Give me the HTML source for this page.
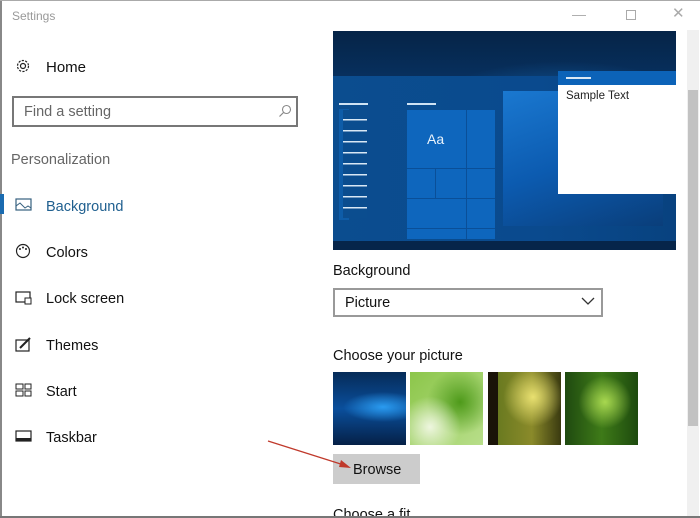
<!DOCTYPE html>
<html><head><style>
*{margin:0;padding:0;box-sizing:border-box}
body{width:700px;height:518px;overflow:hidden;background:#fff;font-family:"Liberation Sans",sans-serif;position:relative;color:#000}
.a{position:absolute}
.nav{font-size:14.5px;color:#111}
</style></head><body>
<div class="a" style="left:0;top:0;width:2px;height:518px;background:#888"></div>
<div class="a" style="left:0;top:0;width:700px;height:1px;background:#aaa"></div>
<div class="a" style="left:0;top:516px;width:700px;height:2px;background:#777"></div>
<div class="a" style="left:12px;top:9px;font-size:12px;color:#999">Settings</div>
<div class="a" style="left:572px;top:6px;font-size:14px;color:#aaa">—</div>
<div class="a" style="left:626px;top:10px;width:10px;height:10px;border:1px solid #aaa"></div>
<div class="a" style="left:672px;top:4px;font-size:15px;color:#aaa">✕</div>

<svg class="a" style="left:15px;top:58px" width="16" height="16" viewBox="0 0 16 16"><circle cx="8" cy="8" r="2.5" fill="none" stroke="#222" stroke-width="1.2"/><circle cx="8" cy="8" r="5.5" fill="none" stroke="#222" stroke-width="1.2" stroke-dasharray="2.2 1.3"/></svg>
<div class="a nav" style="left:46px;top:59px;font-size:15px">Home</div>
<div class="a" style="left:12px;top:96px;width:286px;height:31px;border:2px solid #777"></div>
<div class="a" style="left:24px;top:104px;font-size:14.5px;color:#666">Find a setting</div>
<svg class="a" style="left:278px;top:104px" width="14" height="14"><circle cx="8.5" cy="5.5" r="4" fill="none" stroke="#888" stroke-width="1.1"/><path d="M5.5 8.5L1.5 12.5" stroke="#888" stroke-width="1.2"/></svg>
<div class="a" style="left:11px;top:152px;font-size:14.5px;color:#666">Personalization</div>
<div class="a" style="left:0;top:194px;width:4px;height:20px;background:#1a6bb0"></div>
<svg class="a" style="left:15px;top:198px" width="18" height="14"><rect x="1" y="1" width="15" height="11" fill="none" stroke="#36607f" stroke-width="1.2"/><path d="M1 8l4-3 5 5 3-2 3 2" fill="none" stroke="#36607f"/></svg>
<div class="a nav" style="left:46px;top:199px;color:#1f5f8f">Background</div>
<svg class="a" style="left:15px;top:243px" width="17" height="16"><circle cx="8" cy="8" r="6.5" fill="none" stroke="#222" stroke-width="1.2"/><circle cx="5" cy="6" r="1" fill="#222"/><circle cx="8" cy="4.5" r="1" fill="#222"/><circle cx="11" cy="6" r="1" fill="#222"/></svg>
<div class="a nav" style="left:46px;top:245px">Colors</div>
<svg class="a" style="left:15px;top:291px" width="18" height="14"><rect x="1" y="1" width="14" height="10" fill="none" stroke="#222" stroke-width="1.2"/><rect x="10" y="7" width="6" height="6" fill="#fff" stroke="#222"/></svg>
<div class="a nav" style="left:46px;top:291px">Lock screen</div>
<svg class="a" style="left:15px;top:337px" width="18" height="16"><rect x="1" y="3" width="13" height="11" fill="none" stroke="#222" stroke-width="1.2"/><path d="M5 11L15 1" stroke="#222" stroke-width="2"/></svg>
<div class="a nav" style="left:46px;top:338px">Themes</div>
<svg class="a" style="left:15px;top:383px" width="18" height="14"><rect x="1" y="1" width="7" height="5" fill="none" stroke="#222"/><rect x="10" y="1" width="6" height="5" fill="none" stroke="#222"/><rect x="1" y="8" width="7" height="5" fill="none" stroke="#222"/><rect x="10" y="8" width="6" height="5" fill="none" stroke="#222"/></svg>
<div class="a nav" style="left:46px;top:384px">Start</div>
<svg class="a" style="left:15px;top:430px" width="18" height="12"><rect x="1" y="1" width="15" height="10" fill="none" stroke="#222" stroke-width="1.2"/><rect x="1" y="8" width="15" height="3" fill="#222"/></svg>
<div class="a nav" style="left:46px;top:430px">Taskbar</div>

<div class="a" style="left:333px;top:31px;width:343px;height:219px;background:radial-gradient(ellipse 180px 90px at 230px 120px,#1d7fd6,transparent),linear-gradient(#052447 0%,#0a3a72 40%,#0b4a90 60%,#062a55 100%);overflow:hidden">
 <div class="a" style="left:0;top:45px;width:343px;height:180px;background:linear-gradient(90deg,#0b4d8f,#0a4a8e 60%,#08427f)"></div>
 <div class="a" style="left:170px;top:60px;width:160px;height:135px;background:linear-gradient(160deg,#1a78d0,#0c5bb0 50%,#0a3e7a)"></div>
 <div class="a" style="left:0;top:210px;width:343px;height:9px;background:#06254a"></div>
 <div class="a" style="left:6px;top:72px;width:29px;height:2px;background:#cfe3f4"></div>
 <div class="a" style="left:6px;top:78px;width:10px;height:111px;background:#0e5ca8"></div>
 <div class="a" style="left:10px;top:79px;width:24px;height:108px;background:repeating-linear-gradient(#0b4d8f 0 9px,#d9e8f5 9px 10.6px,#0b4d8f 10.6px 11px)"></div>
 <div class="a" style="left:74px;top:72px;width:29px;height:2px;background:#cfe3f4"></div>
 <div class="a" style="left:74px;top:79px;width:88px;height:129px;background:#0e66bd"></div>
 <div class="a" style="left:74px;top:137px;width:88px;height:1px;background:#0a4f98"></div>
 <div class="a" style="left:74px;top:167px;width:88px;height:1px;background:#0a4f98"></div>
 <div class="a" style="left:74px;top:197px;width:88px;height:1px;background:#0a4f98"></div>
 <div class="a" style="left:133px;top:79px;width:1px;height:129px;background:#0a4f98"></div>
 <div class="a" style="left:102px;top:137px;width:1px;height:30px;background:#0a4f98"></div>
 <div class="a" style="left:94px;top:100px;font-size:14px;color:#e8f2fb">Aa</div>
 <div class="a" style="left:225px;top:40px;width:118px;height:14px;background:#0c63b8"></div>
 <div class="a" style="left:233px;top:46px;width:25px;height:2px;background:#d9e8f5"></div>
 <div class="a" style="left:225px;top:54px;width:118px;height:109px;background:#fff"></div>
 <div class="a" style="left:233px;top:59px;font-size:11.5px;color:#222">Sample Text</div>
</div>

<div class="a" style="left:333px;top:263px;font-size:14.5px;color:#111">Background</div>
<div class="a" style="left:333px;top:288px;width:270px;height:29px;border:2px solid #999"></div>
<div class="a" style="left:345px;top:295px;font-size:14.5px;color:#111">Picture</div>
<svg class="a" style="left:581px;top:297px" width="14" height="9"><path d="M1 1l6 6 6-6" fill="none" stroke="#333" stroke-width="1.3"/></svg>
<div class="a" style="left:333px;top:348px;font-size:14.5px;color:#111">Choose your picture</div>
<div class="a" style="left:333px;top:372px;width:73px;height:73px;background:radial-gradient(ellipse 40px 15px at 50px 35px,#2a9bf0,transparent),linear-gradient(#062b58,#0a4f9c 50%,#052046)"></div>
<div class="a" style="left:410px;top:372px;width:73px;height:73px;background:radial-gradient(circle at 20px 55px,#eef6df,transparent 40%),radial-gradient(circle at 50px 30px,#4e9a1a,transparent 50%),linear-gradient(135deg,#8cc64a,#b8de8a)"></div>
<div class="a" style="left:488px;top:372px;width:73px;height:73px;background:radial-gradient(circle at 45px 25px,#e8e070,transparent 45%),linear-gradient(90deg,#1a1408 0 10px,#6a7a20 10px,#8a8a2a 60%,#3a3a10);"></div>
<div class="a" style="left:565px;top:372px;width:73px;height:73px;background:radial-gradient(circle at 40px 30px,#a8d850,transparent 45%),linear-gradient(90deg,#1f4a10,#3e7a18,#1d4a0e)"></div>
<div class="a" style="left:333px;top:454px;width:87px;height:30px;background:#cccccc"></div>
<div class="a" style="left:353px;top:462px;font-size:14.5px;color:#111">Browse</div>
<svg class="a" style="left:265px;top:438px" width="90" height="35"><path d="M3 3L82 28" stroke="#c0392b" stroke-width="1.3"/><path d="M86 30L76 22L74 29Z" fill="#c0392b"/></svg>
<div class="a" style="left:333px;top:508px;width:80px;height:8px;overflow:hidden"><div style="font-size:14.5px;color:#111;margin-top:-1px">Choose a fit</div></div>

<div class="a" style="left:687px;top:30px;width:12px;height:486px;background:#f0f0f0"></div>
<div class="a" style="left:688px;top:90px;width:10px;height:336px;background:#c2c2c2"></div>
</body></html>
